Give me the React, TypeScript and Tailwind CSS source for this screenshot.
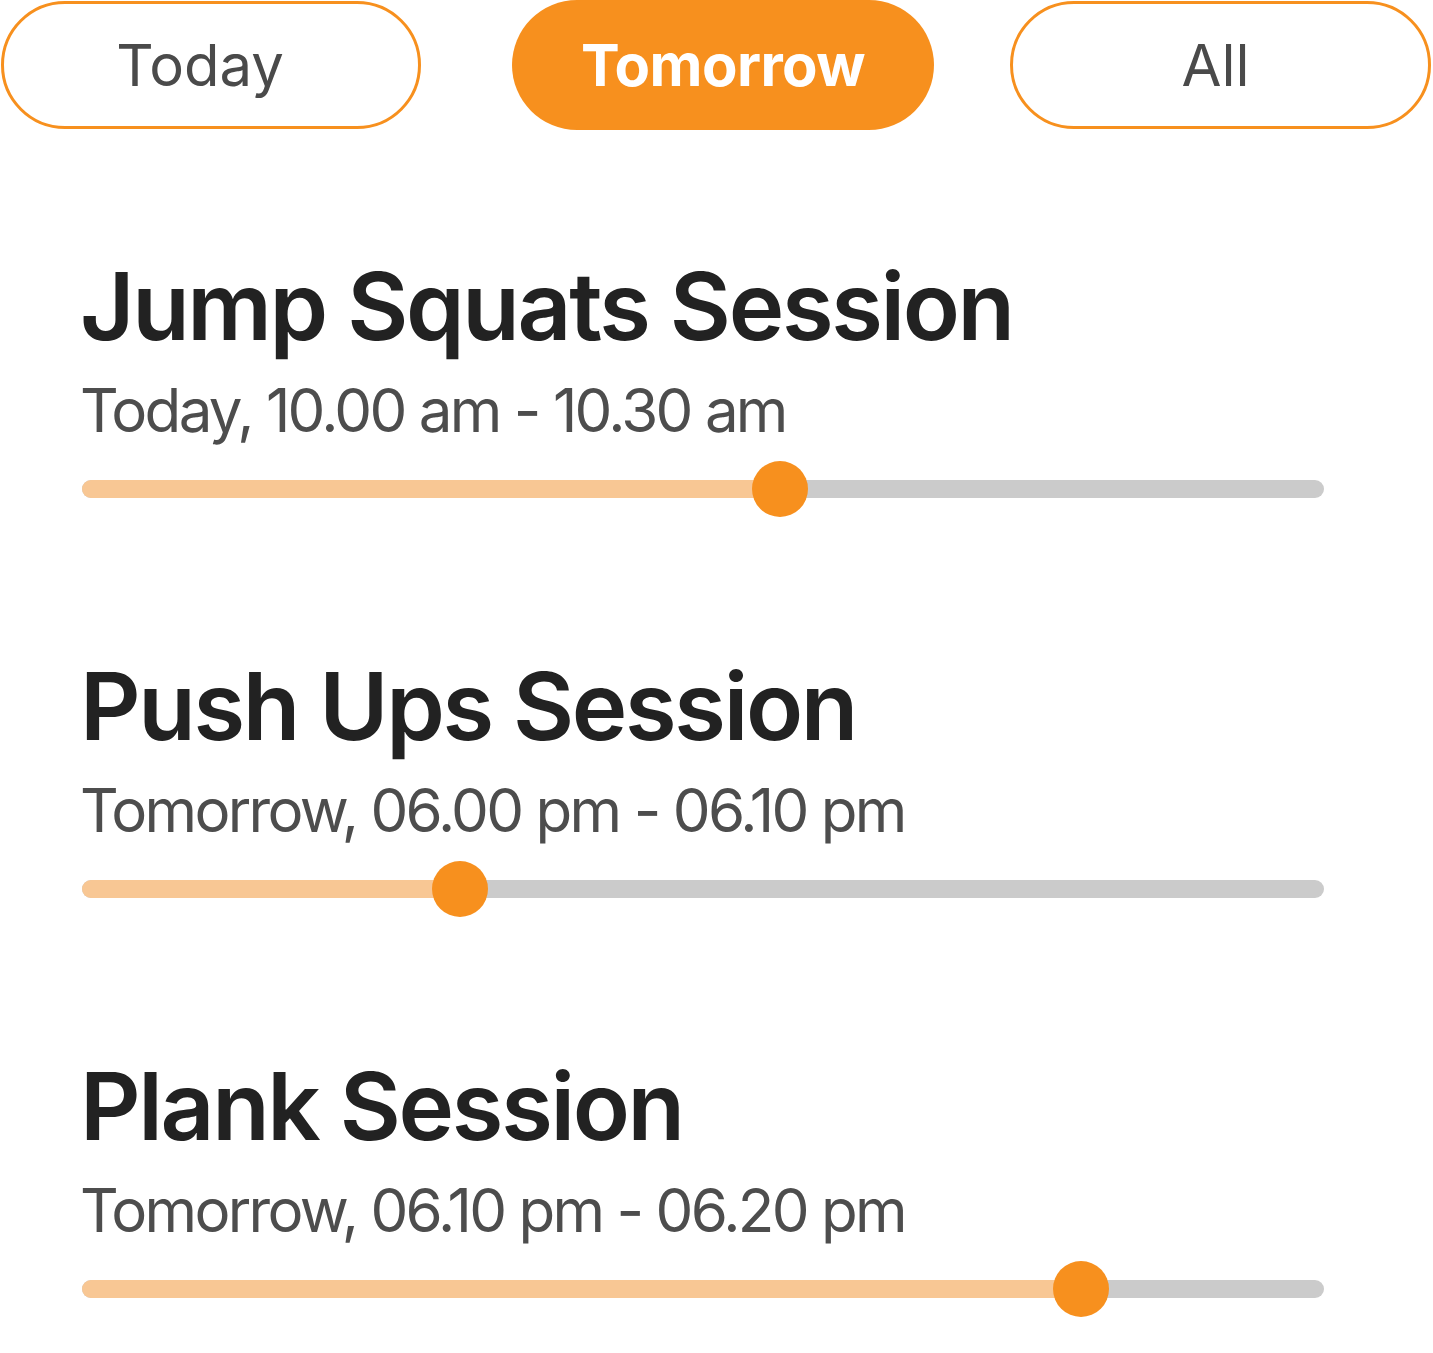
const sessions = [
  { title: "Jump Squats Session", time: "Today, 10.00 am - 10.30 am", progress: 56.2 },
  { title: "Push Ups Session", time: "Tomorrow, 06.00 pm - 06.10 pm", progress: 30.4 },
  { title: "Plank Session", time: "Tomorrow, 06.10 pm - 06.20 pm", progress: 80.4 },
];

function Slider({ progress }: { progress: number }) {
  return (
    <div className="relative h-[56px] w-[1242px] flex items-center">
      <div className="h-[18px] w-full rounded-full bg-[#cbcbcb] overflow-hidden">
        <div className="h-full bg-[#f8c794]" style={{ width: `${progress}%` }} />
      </div>
      <div
        className="absolute top-0 w-[56px] h-[56px] -ml-[28px] rounded-full bg-[#f7901e]"
        style={{ left: `${progress}%` }}
      />
    </div>
  );
}

export default function App() {
  return (
    <div className="w-[1433px] h-[1353px] bg-white font-['Inter',sans-serif]">
      <div className="flex items-start">
        <button className="ml-[1px] mt-[1px] w-[420px] h-[128px] rounded-full border-[3px] border-[#f7901e] text-[58px] text-[#4a4a4a] pr-[22px]">
          Today
        </button>
        <button className="ml-[91px] w-[422px] h-[130px] rounded-full bg-[#f7901e] text-[58px] font-bold tracking-[-0.01em] text-white">
          Tomorrow
        </button>
        <button className="ml-[76px] mt-[1px] w-[421px] h-[128px] rounded-full border-[3px] border-[#f7901e] text-[58px] text-[#4a4a4a] pr-[10px]">
          All
        </button>
      </div>

      <div className="pl-[80px] pt-[129px] flex flex-col gap-[142px]">
        {sessions.map((s) => (
          <div key={s.title} className="flex flex-col">
            <h2 className="text-[94px] leading-none font-semibold tracking-[-0.025em] text-[#222222]">
              {s.title}
            </h2>
            <p className="mt-[27px] text-[60px] leading-none tracking-[-0.045em] text-[#4d4d4d]">
              {s.time}
            </p>
            <div className="mt-[21px] ml-[2px]">
              <Slider progress={s.progress} />
            </div>
          </div>
        ))}
      </div>
    </div>
  );
}
